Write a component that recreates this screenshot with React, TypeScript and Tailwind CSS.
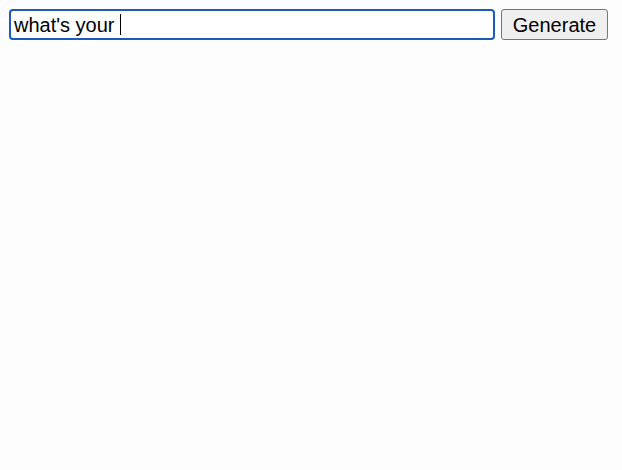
import React from "react";

export default function App() {
  return (
    <div className="min-h-[470px] w-full bg-[#fdfdfd] font-['Liberation_Sans',Arial,sans-serif] text-black">
      <div className="flex items-center gap-[6px] pl-[9px] pt-[9px]">
        <div className="flex h-[31px] w-[486px] items-center rounded-[4px] border-[2.5px] border-[#1b5cb8] bg-white pl-[3px] text-[20px] leading-none">
          <span className="whitespace-pre">what's your </span>
          <span className="h-[21px] w-[1px] bg-black" />
        </div>
        <button className="h-[31px] w-[107px] rounded-[3px] border border-[#767676] bg-[#efefef] text-[20px] leading-none text-black">
          Generate
        </button>
      </div>
    </div>
  );
}
